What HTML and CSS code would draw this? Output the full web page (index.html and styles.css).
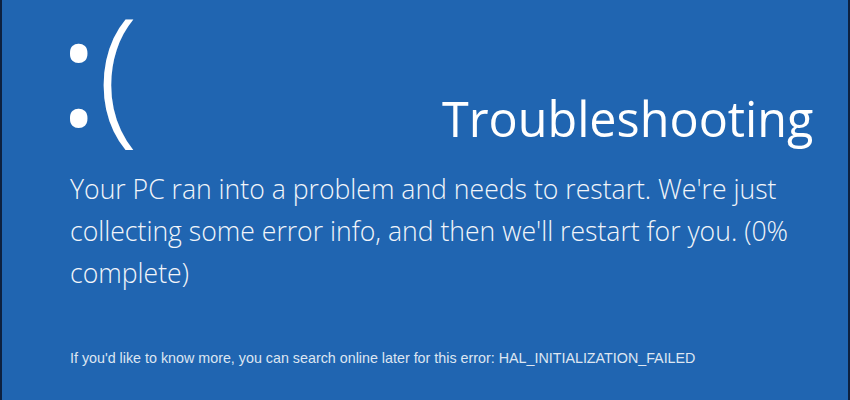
FILE: index.html
```html
<!DOCTYPE html>
<html>
<head>
<meta charset="utf-8">
<link rel="stylesheet" href="styles.css">
</head>
<body>
<div class="screen">
  <div class="face"><span class="eyes">:</span>(</div>
  <div class="label">Troubleshooting</div>
  <p class="message">Your PC ran into a problem and needs to restart. We're just collecting some error info, and then we'll restart for you. (0% complete)</p>
  <p class="info">If you'd like to know more, you can search online later for this error: HAL_INITIALIZATION_FAILED</p>
</div>
</body>
</html>
```
FILE: styles.css
```css
html, body {
  margin: 0;
  padding: 0;
  background: #2065b1;
}
.screen {
  position: relative;
  display: flow-root;
  box-sizing: border-box;
  width: 850px;
  height: 400px;
  background: #2065b1;
  border-left: 2px solid #0d2140;
  border-right: 2px solid #0d2140;
  padding: 0 0 0 68px;
  color: #ffffff;
  font-family: "Open Sans", "Noto Sans", sans-serif;
}
.face {
  font-family: "Open Sans", sans-serif;
  font-weight: 300;
  font-size: 150px;
  line-height: 136px;
  height: 160px;
  margin: 0 0 0 -11px;
}
.eyes {
  font-weight: 500;
  margin-right: -1px;
}
.label {
  position: absolute;
  left: 440px;
  top: 94px;
  font-family: "Open Sans", sans-serif;
  font-size: 48.5px;
  font-weight: 400;
  line-height: 48px;
}
.message {
  margin: 8px 0 0;
  width: 760px;
  font-weight: 300;
  font-size: 26.6px;
  line-height: 42px;
  color: #f2f5fa;
}
.info {
  margin: 56px 0 0;
  font-size: 14.3px;
  line-height: 16px;
  font-family: "Liberation Sans", sans-serif;
  color: #dde6f2;
}
```
